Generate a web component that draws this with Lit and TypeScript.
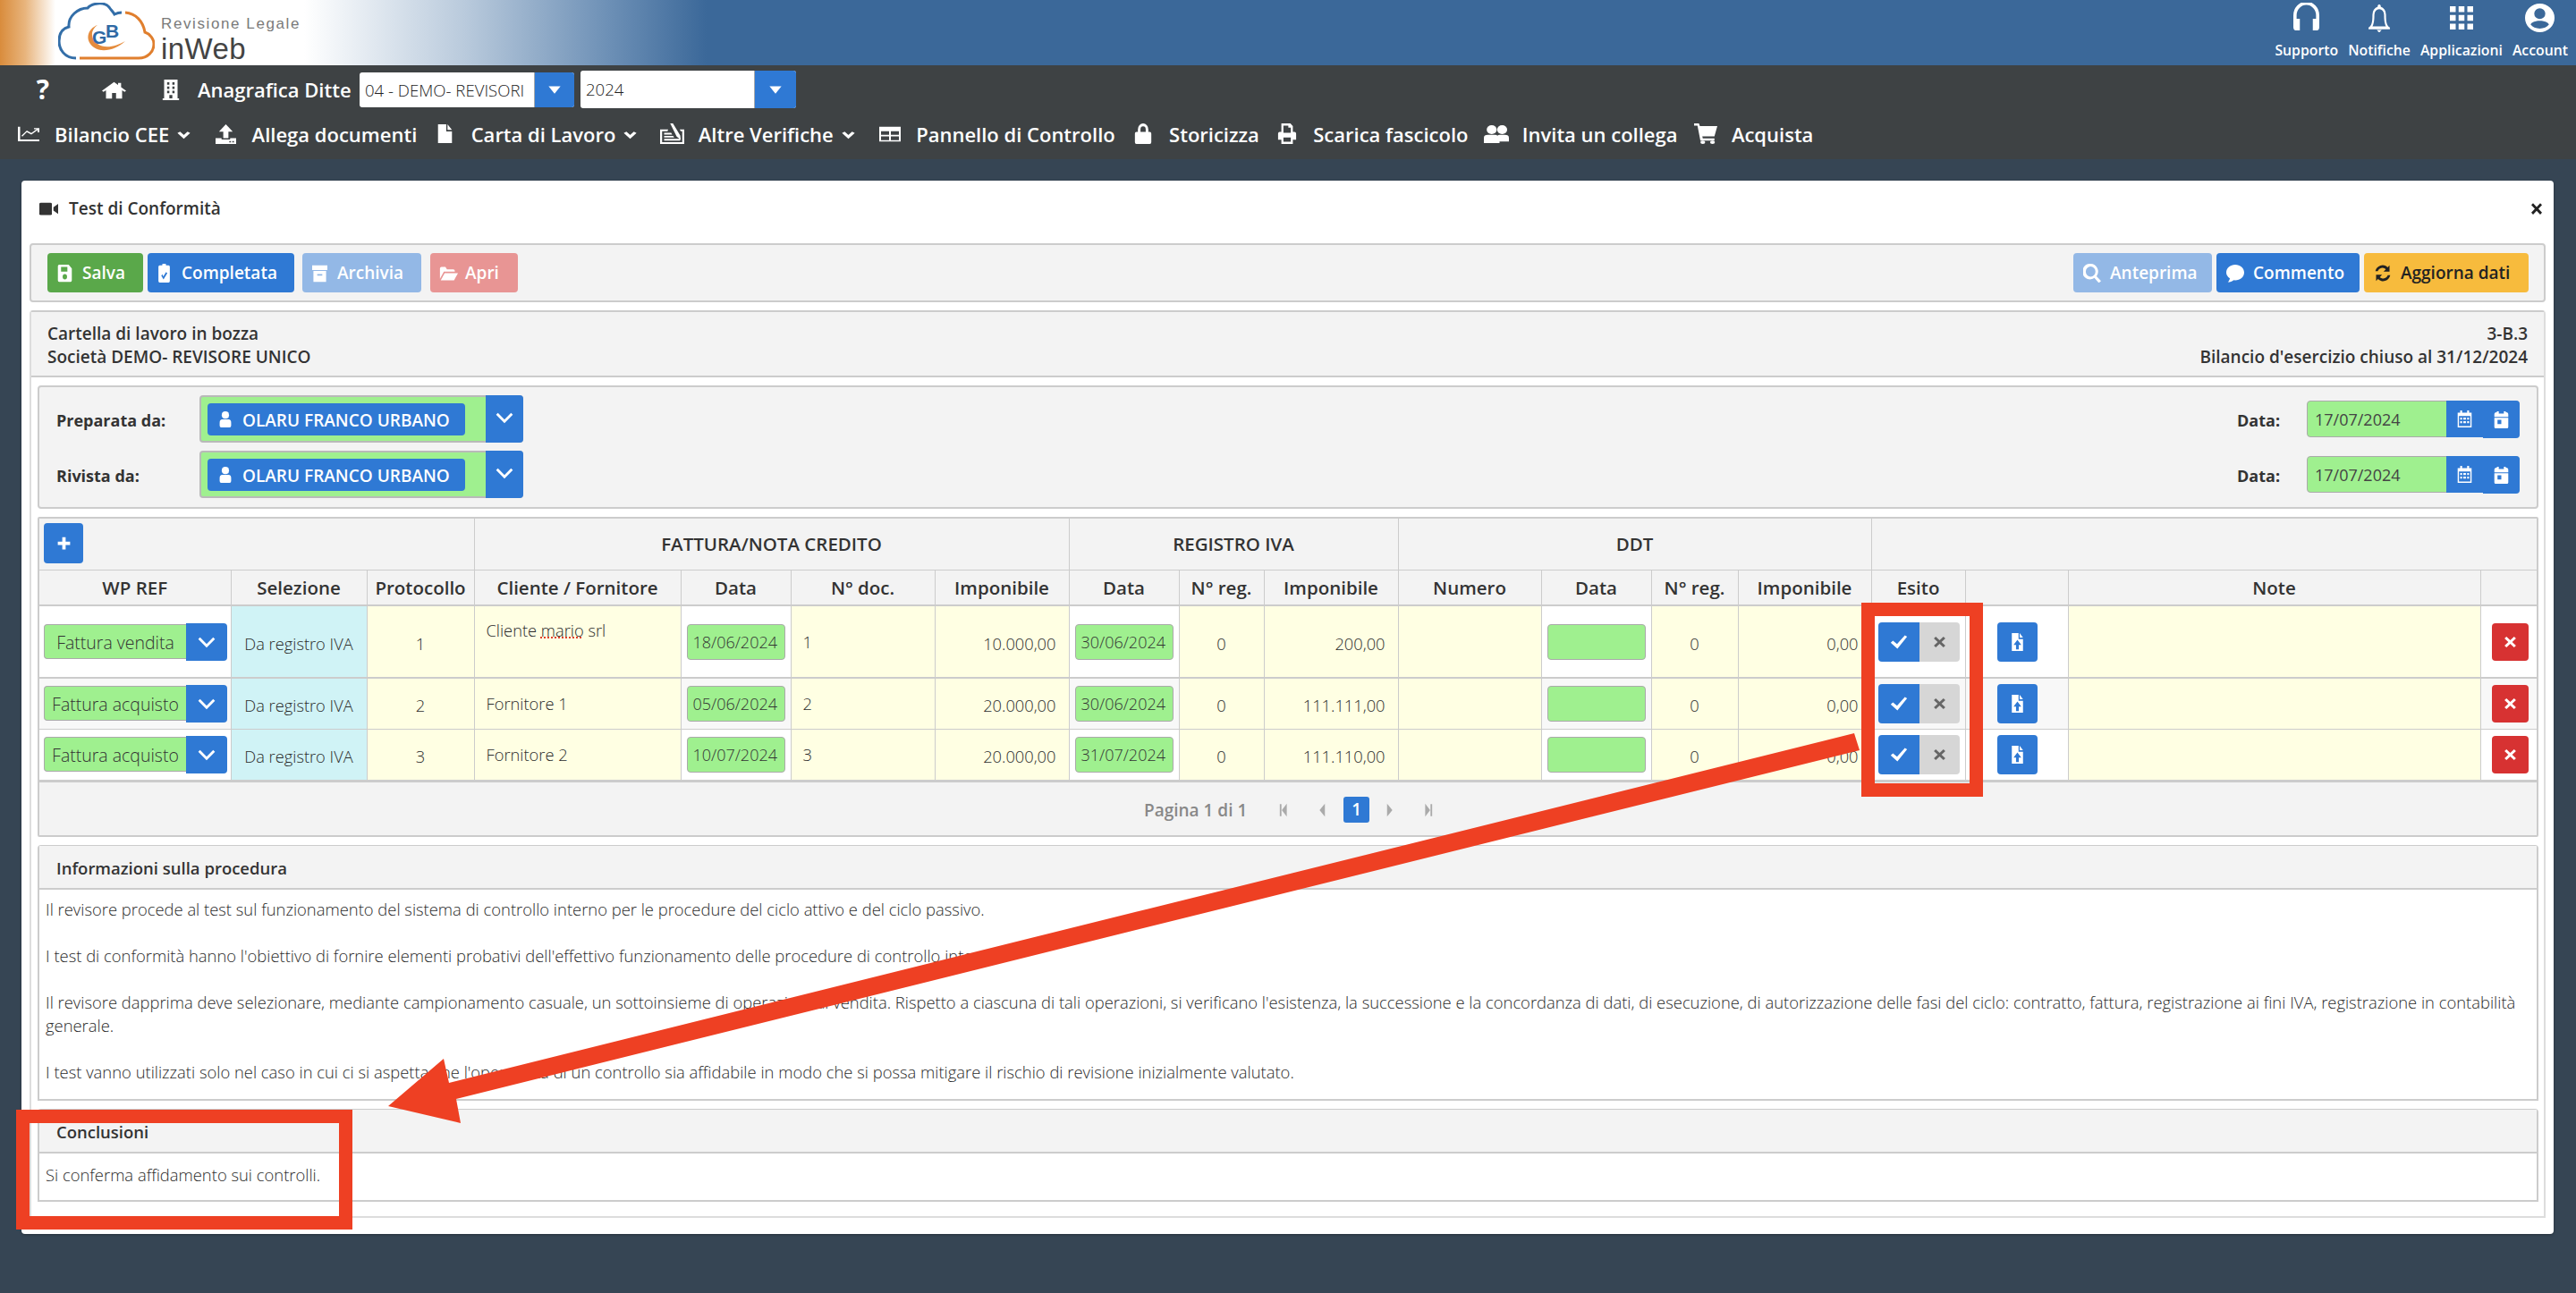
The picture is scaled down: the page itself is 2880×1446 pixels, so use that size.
import { LitElement, html, css, svg } from "lit";
import { customElement } from "lit/decorators.js";

const P: Record<string, any> = {
  home: svg`<path d="M12 2 0 13l1.500 1.700L4 12.500V23h6v-7h4v7h6V12.500l2.500 2.200L24 13l-5-4.500V3h-3v2.800z"/>`,
  building: svg`<path fill-rule="evenodd" d="M3 0h18v22h2v2H1v-2h2zM7 3v3h3V3zm7 0v3h3V3zM7 8v3h3V8zm7 0v3h3V8zM7 13v3h3v-3zm7 0v3h3v-3zm-4 5v4h4v-4z"/>`,
  chart: svg`<path d="M0 1h2.500v20H24v3H0z"/><path d="m4 15 6-8 5 4 6-6h-3V3h6v7h-2V6.500l-7 7-5-4-5 7z"/>`,
  upload: svg`<path d="M12 0 4 9h5v8h6V9h5z"/><path fill-rule="evenodd" d="M0 17h7v1.500h10V17h7v7H0zm16 3.500v1.500h2v-1.500zm3.500 0v1.500h2v-1.500z"/>`,
  file: svg`<path d="M1 0h13v9h9v15H1zM16 0l7 7h-7z"/>`,
  edit: svg`<path fill-rule="evenodd" d="M0 7h8l-.6 2H2v13h20V9h-1.500l-1-2H24v17H0z"/><path d="M10 0l2.500-.5L20 14l.5 5-4-3.500zM4 11h7l1 2H4zm0 3.500h9l1 2H4zM4 18h16v2H4z"/>`,
  table: svg`<path fill-rule="evenodd" d="M0 2h24v20H0zm2 6v5h9V8zm11 0v5h9V8zM2 15v5h9v-5zm11 0v5h9v-5z"/>`,
  lock: svg`<path fill-rule="evenodd" d="M5 10V7a7 7 0 0 1 14 0v3h2a2 2 0 0 1 2 2v10a2 2 0 0 1-2 2H3a2 2 0 0 1-2-2V12a2 2 0 0 1 2-2zm3.500 0h7V7a3.500 3.500 0 0 0-7 0z"/>`,
  print: svg`<path fill-rule="evenodd" d="M5 0h11l3 3v7h2a2 2 0 0 1 2 2v7h-4v5H5v-5H1v-7a2 2 0 0 1 2-2h2zm2.500 2.500V11h9V5h-3V2.500zm0 14V21.500h9v-5z"/>`,
  users: svg`<ellipse cx="7.500" cy="6" rx="4.800" ry="6"/><ellipse cx="17.500" cy="6" rx="4.800" ry="6"/><path d="M0 24v-7a4 4 0 0 1 4-4h7a3 3 0 0 1 2 1 3 3 0 0 1 2-1h5a4 4 0 0 1 4 4v5h-9v2z"/>`,
  cart: svg`<path d="M0 0h5l1 3h18l-3 12H8.500l.5 2.500h12V20H6.500L3.500 2.500H0z"/><ellipse cx="9" cy="22" rx="2.500" ry="2"/><ellipse cx="19" cy="22" rx="2.500" ry="2"/>`,
  headphones: svg`<path d="M3 14v-3a9 9 0 0 1 18 0v3h3v-3a12 12 0 0 0-24 0v10a3 3 0 0 0 3 3h3V14zM21 14h-3v10h3a3 3 0 0 0 3-3v-7z"/>`,
  bell: svg`<path fill-rule="evenodd" d="M12 0a1.500 1.500 0 0 1 1.500 2A7 7 0 0 1 19 9c0 7 1 9 4 11v1.500H1V20c3-2 4-4 4-11a7 7 0 0 1 5.500-7A1.500 1.500 0 0 1 12 0zM12 4a5 5 0 0 0-5 5c0 5-.6 7.500-2 10h14c-1.400-2.500-2-5-2-10a5 5 0 0 0-5-5z"/><path d="M9.500 22h5L12 24.500z"/>`,
  grid: svg`<path d="M0 0h6v6H0zm9 0h6v6H9zm9 0h6v6h-6zM0 9h6v6H0zm9 0h6v6H9zm9 0h6v6h-6zM0 18h6v6H0zm9 0h6v6H9zm9 0h6v6h-6z"/>`,
  account: svg`<path fill-rule="evenodd" d="M12 0a12 12 0 1 1 0 24 12 12 0 0 1 0-24zm0 4a4.500 4.500 0 1 0 0 9 4.500 4.500 0 0 0 0-9zm0 10.500c-3.500 0-6.500 1.200-7.500 3 1.500 2.200 4.300 3.500 7.500 3.500s6-1.300 7.500-3.500c-1-1.800-4-3-7.500-3z"/>`,
  video: svg`<rect x="0" y="1" width="16" height="22" rx="2"/><path d="M18 9 24 3v18l-6-6z"/>`,
  times: svg`<path d="m3 6 3-3 6 6 6-6 3 3-6 6 6 6-3 3-6-6-6 6-3-3 6-6z"/>`,
  check: svg`<path d="m1 13 3-3 5.500 5L20 2l3 2L10 22z"/>`,
  save: svg`<path fill-rule="evenodd" d="M3 1h15l5 5v15a2 2 0 0 1-2 2H3a2 2 0 0 1-2-2V3a2 2 0 0 1 2-2zm3 3v6h10V4zm6 9a3.500 3.500 0 1 0 0 7 3.500 3.500 0 0 0 0-7z"/>`,
  clip: svg`<path fill-rule="evenodd" d="M9 2a3 3 0 0 1 6 0h4a2 2 0 0 1 2 2v18a2 2 0 0 1-2 2H5a2 2 0 0 1-2-2V4a2 2 0 0 1 2-2zm-1.500 13L11 20l6-8-2-1.500-4.300 5.800L9.300 13.500z"/>`,
  archive: svg`<path fill-rule="evenodd" d="M0 2h24v6H0zM2 9h20v14H2zm6 4v2h8v-2z"/>`,
  folder: svg`<path d="M1 6a2 2 0 0 1 2-2h5l2 3h8a2 2 0 0 1 2 2v1H6L1 19z"/><path d="M7 12h17l-5 9H2z"/>`,
  search: svg`<path fill-rule="evenodd" d="M10 0a10 10 0 0 1 8 16l6 6-3 2.500-6-6.500A10 10 0 1 1 10 0zm0 3.500a6.500 6.500 0 1 0 0 13 6.500 6.500 0 0 0 0-13z"/>`,
  comment: svg`<path d="M12 1c6.600 0 12 4.400 12 10s-5.400 10-12 10l-2-.1C8 22.700 5 23.500 2 23.500c1.500-1.500 2.500-3 2.800-5C1.800 16.500 0 14 0 11 0 5.400 5.400 1 12 1z"/>`,
  refresh: svg`<path d="M21 2v8h-8l3-3a6.500 6.500 0 0 0-10.700 2.500H2A10 10 0 0 1 18.500 4.500zM3 22v-8h8l-3 3a6.500 6.500 0 0 0 10.700-2.500H22A10 10 0 0 1 5.500 19.500z"/>`,
  cal: svg`<path fill-rule="evenodd" d="M5 0h3v3h8V0h3v3h4v21H1V3h4zM3 8v14h18V8zm2 2h3v3H5zm5 0h4v3h-4zm6 0h3v3h-3zM5 15h3v3H5zm5 0h4v3h-4zm6 0h3v3h-3z"/>`,
  calCheck: svg`<path fill-rule="evenodd" d="M5 0h3v3h8V0h3v1.500a3 3 0 0 1 4 3V22a2 2 0 0 1-2 2H3a2 2 0 0 1-2-2V4.500a3 3 0 0 1 4-3zM1 8v1h22V8zm5 4v6h6v-6z"/>`,
  user: svg`<ellipse cx="12" cy="5.500" rx="7" ry="5.500"/><path d="M1 17a5 5 0 0 1 5-5h12a5 5 0 0 1 5 5v4a3 3 0 0 1-3 3H4a3 3 0 0 1-3-3z"/>`,
  plus: svg`<path d="M9 1h6v8h8v6h-8v8H9v-8H1V9h8z"/>`,
  fileup: svg`<path fill-rule="evenodd" d="M2 0h12v8h8v16H2zm10 9-7 7h4.500v6h5v-6H19zM16 0l6 6h-6z"/>`,
  chev: svg`<path d="M2 7 12 17 22 7" fill="none" stroke="currentColor" stroke-width="3.500"/>`,
  chevBold: svg`<path d="M3 5 12 17 21 5" fill="none" stroke="currentColor" stroke-width="6"/>`,
  caret: svg`<path d="M2 6h20L12 20z"/>`,
  first: svg`<path d="M4 2h4v20H4zM21 1v22L9 12z"/>`,
  prev: svg`<path d="M18 1v22L5 12z"/>`,
  next: svg`<path d="M6 1v22l13-11z"/>`,
  last: svg`<path d="M3 1v22l12-11zM16 2h4v20h-4z"/>`,
};

const ic = (n: string, cls = "") => html`<svg class="ic ${cls}" viewBox="0 0 24 24" preserveAspectRatio="none">${P[n]}</svg>`;

const ROWS = [
  { wp: "Fattura vendita", prot: "1", cli: "Cliente", cli2: "mario", cli3: "srl", d: "18/06/2024", doc: "1", imp: "10.000,00", rd: "30/06/2024", ri: "200,00", cls: "r1" },
  { wp: "Fattura acquisto", prot: "2", cli: "Fornitore 1", d: "05/06/2024", doc: "2", imp: "20.000,00", rd: "30/06/2024", ri: "111.111,00", cls: "r2" },
  { wp: "Fattura acquisto", prot: "3", cli: "Fornitore 2", d: "10/07/2024", doc: "3", imp: "20.000,00", rd: "31/07/2024", ri: "111.110,00", cls: "r3" },
];
const COLS = [214, 152, 120, 231, 123, 161, 150, 123, 95, 150, 160, 123, 97, 149, 105, 115, 461, 63];

@customElement("app-root")
export class AppRoot extends LitElement {
  static styles = css`
    :host { display: block; position: relative; width: 2880px; height: 1446px; overflow: hidden; background: #364554; font-family: "Open Sans", sans-serif; color: #333; }
    * { box-sizing: border-box; }
    .ic { display: block; fill: currentColor; flex: none; width: 20px; height: 20px; }
    .top { height: 73px; display: flex; justify-content: flex-end; padding-right: 9px; background: linear-gradient(90deg, #d98c3c 0, #e8b47c 28px, #fff 62px, #fff 340px, #b9cadc 520px, #6d90b6 680px, #3b6899 790px); position: relative; }
    .logo { position: absolute; left: 65px; top: 3px; width: 108px; height: 65px; }
    .brand { position: absolute; left: 180px; top: 0; }
    .brand .a { font: 400 17px/20px "Liberation Sans", sans-serif; letter-spacing: 1.600px; margin-top: 17px; color: #7a7a7a; white-space: nowrap; }
    .brand .b { font: 400 33px/36px "Liberation Sans", sans-serif; color: #444; letter-spacing: .4px; }
    .tools { display: flex; gap: 11px; color: #fff; font-size: 15.800px; font-weight: 600; }
    .tool { display: flex; flex-direction: column; align-items: center; }
    .tool .box { height: 46px; display: flex; align-items: center; justify-content: center; padding-bottom: 6px; }
    .tool span { line-height: 20px; }
    .i-h { width: 29px; height: 31px; margin-top: -4px; }
    .i-b { width: 26px; height: 31px; }
    .i-g { width: 26px; height: 26px; }
    .i-a { width: 33px; height: 32px; }

    .nav { height: 105px; background: #3e4244; color: #fff; font-size: 22px; font-weight: 600; }
    .row1 { height: 50px; display: flex; align-items: center; padding-top: 4px; }
    .row2 { height: 55px; display: flex; align-items: center; padding: 0 0 2px 18px; gap: 17.400px; }
    .q { width: 16px; margin-left: 40px; font-size: 30px; font-weight: 700; text-align: center; line-height: 34px; }
    .i-home { width: 27px; height: 21px; margin-left: 58px; }
    .i-bld { width: 20px; height: 23px; margin-left: 40px; }
    .anag { margin-left: 20px; width: 181px; white-space: nowrap; }
    .sel { display: flex; height: 39px; background: #fff; color: #222; font-size: 18.600px; font-weight: 300; border-radius: 3px; }
    .sel .v { padding-left: 6px; line-height: 39px; white-space: nowrap; overflow: hidden; width: 196px; border-right: 1px solid #aaa; }
    .sel .b { width: 44px; background: #2f79d4; border-radius: 0 3px 3px 0; display: flex; align-items: center; justify-content: center; color: #fff; }
    .sel.two { height: 42px; margin-left: 7px; }
    .sel.two .v { width: 195px; line-height: 42px; }
    .sel.two .b { width: 46px; }
    .i-caret { width: 16px; height: 14px; }
    .item { display: flex; align-items: center; white-space: nowrap; }
    .item .box { width: 28px; margin-right: 15px; display: flex; justify-content: center; }
    .n-chart { width: 24px; height: 17px; }
    .n-upload { width: 23px; height: 22px; }
    .n-file { width: 17px; height: 21px; }
    .n-edit { width: 27px; height: 23px; }
    .n-table { width: 24px; height: 20px; }
    .n-lock { width: 20px; height: 23px; }
    .n-print { width: 22px; height: 23px; }
    .n-users { width: 28px; height: 20px; }
    .n-cart { width: 26px; height: 23px; }
    .item .ch { width: 15px; height: 10px; margin: 3px 8px 0 9px; }

    .card { position: relative; margin: 24px 0 0 24px; width: 2831px; height: 1178px; background: #fff; border-radius: 4px; padding: 0 9px; box-shadow: 0 1px 3px rgba(0,0,0,.3); }
    .ctitle { height: 70px; display: flex; align-items: center; font-size: 19px; font-weight: 600; padding: 0 2px 8px 11px; color: #333; }
    .ctitle .i-v { width: 21px; height: 15px; margin-right: 12px; color: #333; }
    .ctitle .x { width: 16px; height: 17px; margin-right: 0; color: #222; }
    .bar { height: 66px; border: 2px solid #ccc; border-radius: 4px; background: #f3f3f3; display: flex; align-items: center; padding: 0 17px 0 18px; }
    .btn { height: 44px; border-radius: 4px; display: flex; align-items: center; color: #fff; font-size: 19px; font-weight: 600; white-space: nowrap; padding-left: 11px; }
    .btn .ic { width: 17px; height: 21px; margin-right: 11px; }
    .green { background: #5aa84a; } .blue { background: #2f79d4; } .lblue { background: #93b8e6; } .pink { background: #e89594; } .yellow { background: #f7bb3d; color: #222; }
    .w1 { width: 107px; margin-right: 5px; } .w2 { width: 164px; margin-right: 9px; padding-left: 10px; } .w3 { width: 133px; margin-right: 10px; } .w4 { width: 98px; padding-left: 10px; }
    .w4 .ic { width: 21px; margin-right: 8px; }
    .w5 { width: 155px; margin-right: 5px; } .w6 { width: 160px; margin-right: 5px; } .w7 { width: 184px; }
    .w5 .ic, .w6 .ic, .w7 .ic { width: 20px; margin-right: 10px; }
    .grow { flex: 1; }
    .outer { margin-top: 9px; height: 1015px; border: 2px solid #ddd; border-top: 2px solid #ccc; border-radius: 4px 4px 0 0; }
    .ohead { height: 73px; background: #f3f3f3; border-bottom: 2px solid #ccc; padding: 2px 18px 0; display: flex; justify-content: space-between; font-size: 19px; font-weight: 600; line-height: 26px; align-items: center; }
    .ohead .r { text-align: right; }
    .obody { padding: 9px 6px 0 7px; }
    .people { height: 138px; border: 2px solid #ccc; border-radius: 4px; background: #f3f3f3; display: grid; grid-template-rows: 53px 53px; row-gap: 9px; padding: 9px 0 0 19px; }
    .prow { display: flex; align-items: center; font-size: 18px; font-weight: 700; }
    .prow .lbl { width: 160px; padding-top: 2px; }
    .pick { width: 362px; height: 53px; display: flex; background: #9ff08f; border: 2px solid #b9b9b9; border-radius: 4px; align-items: center; padding-left: 7px; }
    .chip { width: 288px; height: 36px; background: #2f79d4; border-radius: 4px; color: #fff; display: flex; align-items: center; padding: 2px 0 0 13px; white-space: nowrap; font-size: 19px; font-weight: 600; }
    .chip .ic { width: 14px; height: 18px; margin: -2px 12px 0 0; }
    .pick .arr { margin-left: auto; width: 42px; align-self: stretch; margin-top: -2px; margin-bottom: -2px; margin-right: -2px; background: #2f79d4; border-radius: 0 4px 4px 0; color: #fff; display: flex; justify-content: center; padding-top: 15px; }
    .i-chev { width: 20px; height: 20px; }
    .prow .data { margin-left: auto; width: 78px; padding-top: 2px; }
    .dinp { width: 238px; height: 41px; display: flex; margin-right: 19px; border: 1px solid #aaa; border-radius: 4px; background: #9ff08f; font-size: 18px; font-weight: 400; color: #444; line-height: 41px; padding-left: 8px; }
    .dinp .t { width: 148px; }
    .dinp .db { width: 41px; margin: -1px 0; background: #2f79d4; color: #fff; display: flex; align-items: center; justify-content: center; }
    .dinp .db:last-child { margin: -1px -1px -2px 0; border-radius: 0 4px 4px 0; }
    .dinp .ic { width: 17px; height: 19px; }

    .tw { margin-top: 9px; height: 358px; border: 2px solid #ccc; background: #f3f3f3; border-radius: 2px; }
    table { border-collapse: collapse; table-layout: fixed; width: 2792px; font-size: 18.300px; font-weight: 300; color: #2c2c2c; }
    th { background: #f3f3f3; font-size: 20.500px; font-weight: 600; border: 1px solid #ccc; padding: 0; white-space: nowrap; color: #333; }
    .h1 { height: 57px; border-top: 0; }
    .h2 { height: 40px; border-bottom-width: 2px; }
    th:first-child, td:first-child { border-left: 0; }
    th:last-child, td:last-child { border-right: 0; }
    td { border: 1px solid #ccc; padding: 0; white-space: nowrap; vertical-align: middle; }
    tr.r1 td { height: 81px; background: #fff; }
    tr.r2 td { height: 57px; border-top: 2px solid #ccc; background: #f8f8f8; }
    tr.r3 td { height: 58px; border-bottom: 3px solid #ccc; background: #fff; }
    tr td.y { background: #ffffe3; }
    tr td.c { background: #d0f3f6; text-align: center; padding-top: 4px; }
    .ct { text-align: center; padding-top: 4px; }
    .rt { text-align: right; padding: 4px 14px 0 0; }
    .lt { padding: 0 0 0 13px; }
    .lt.atop { vertical-align: top; padding-top: 14px; }
    .sp { text-decoration: underline dotted #e0402a; }
    .wp { display: flex; align-items: center; margin-left: 5px; font-size: 19.500px; }
    .wp .v { width: 159px; height: 39px; background: #9ff08f; border: 1px solid #aaa; border-right: 0; border-radius: 4px 0 0 4px; line-height: 40px; text-align: center; overflow: hidden; color: #333; }
    .wp .a2 { width: 46px; height: 42px; background: #2f79d4; border-radius: 0 4px 4px 0; color: #fff; display: flex; align-items: center; justify-content: center; }
    .date { display: block; width: 110px; height: 40px; margin: 0 auto; background: #9ff08f; border: 1px solid #aaa; border-radius: 4px; line-height: 39px; font-size: 18px; padding-left: 6px; color: #333; }
    .esito { display: flex; width: 91px; height: 44px; margin-left: 7px; border-radius: 4px; overflow: hidden; }
    .esito div { flex: 1; display: flex; align-items: center; justify-content: center; }
    .esito .ok { background: #2f79d4; color: #fff; flex: none; width: 46px; }
    .esito .no { background: #d6d6d6; color: #666; }
    .esito .ok .ic { width: 20px; height: 18px; }
    .esito .no .ic { width: 17px; height: 16px; }
    .fu { width: 45px; height: 44px; background: #2f79d4; border-radius: 4px; color: #fff; margin-left: 35px; display: flex; align-items: center; justify-content: center; }
    .fu .ic { width: 15px; height: 20px; }
    .del { width: 41px; height: 42px; background: #d73232; border-radius: 4px; color: #fff; margin-left: 12px; display: flex; align-items: center; justify-content: center; }
    .del .ic { width: 17px; height: 16px; }
    .plus { width: 44px; height: 45px; margin-left: 5px; background: #2f79d4; border-radius: 4px; color: #fff; display: flex; align-items: center; justify-content: center; margin-top: -2px; }
    .plus .ic { width: 15px; height: 15px; }
    .pg { height: 62px; display: flex; align-items: center; font-size: 19px; font-weight: 600; color: #888; padding-left: 1235px; }
    .pg .ic { width: 11px; height: 16px; color: #aaa; }
    .pg .t { margin-right: 35px; }
    .pg .m { margin-right: 33px; }
    .pg .m2 { margin-right: 18px; }
    .pg .cur { width: 29px; height: 29px; background: #2f79d4; color: #fff; border-radius: 3px; text-align: center; line-height: 29px; margin-right: 17px; }

    .sec { margin-top: 9px; border: 2px solid #ccc; border-radius: 4px 4px 0 0; border-width: 1px 2px 2px 2px; }
    .sec h3 { margin: 0; height: 49px; background: #f3f3f3; border-bottom: 2px solid #ccc; font-size: 18.500px; font-weight: 600; line-height: 50px; padding-left: 19px; }
    .info { height: 286px; }
    .concl { height: 104px; }
    .sec .t { padding: 9px 7px 0; font-size: 18.400px; font-weight: 300; line-height: 26px; color: #2c2c2c; }
    .sec p { margin: 0 0 26px; }
    .concl .t { padding-top: 11px; }

    .ann { position: absolute; border: 15px solid #ee4023; pointer-events: none; }
    .a1 { left: 2081px; top: 674px; width: 136px; height: 217px; }
    .a2b { left: 18px; top: 1241px; width: 376px; height: 134px; }
    .arrow { position: absolute; left: 0; top: 0; width: 2880px; height: 1446px; pointer-events: none; }
  `;

  renderLogo() {
    return html`<svg class="logo" viewBox="65 3 108 65">
      <path d="M85 65C72 65 66 55 66 46 66 35 72 31 77 30 76 18 87 9 98 9 102 4 116 1 122 8 124 11 127 14 128 16 130 15 133 14 136 14" fill="none" stroke="#336ea8" stroke-width="3"/>
      <path d="M140 14C152 15 160 24 162 36 168 38 172 44 172 49 172 58 165 65 155 65H89" fill="none" stroke="#e07f2e" stroke-width="3"/>
      <path d="M109 28C98 32 94 45 105 53 115 60 130 55 140 46 130 52 117 55 109 49 100 42 102 33 109 28z" fill="#e58c3d"/>
      <text x="103" y="49" font-family="Liberation Sans" font-size="21" font-weight="700" fill="#2f6aa5">G</text>
      <text x="118" y="42" font-family="Liberation Sans" font-size="21" font-weight="700" fill="#2f6aa5">B</text>
    </svg>
    <div class="brand"><div class="a">Revisione Legale</div><div class="b">inWeb</div></div>`;
  }

  render() {
    const nav: [string, string, boolean][] = [
      ["chart", "Bilancio CEE", true],
      ["upload", "Allega documenti", false],
      ["file", "Carta di Lavoro", true],
      ["edit", "Altre Verifiche", true],
      ["table", "Pannello di Controllo", false],
      ["lock", "Storicizza", false],
      ["print", "Scarica fascicolo", false],
      ["users", "Invita un collega", false],
      ["cart", "Acquista", false],
    ];
    const person = (l: string) => html`<div class="prow">
      <div class="lbl">${l}</div>
      <div class="pick"><div class="chip">${ic("user")}OLARU FRANCO URBANO</div><div class="arr">${ic("chev", "i-chev")}</div></div>
      <div class="data">Data:</div>
      <div class="dinp"><div class="t">17/07/2024</div><div class="db">${ic("cal")}</div><div class="db">${ic("calCheck")}</div></div>
    </div>`;
    return html`
      <div class="top">
        ${this.renderLogo()}
        <div class="tools">
          <div class="tool"><div class="box">${ic("headphones", "i-h")}</div><span>Supporto</span></div>
          <div class="tool"><div class="box">${ic("bell", "i-b")}</div><span>Notifiche</span></div>
          <div class="tool"><div class="box">${ic("grid", "i-g")}</div><span>Applicazioni</span></div>
          <div class="tool"><div class="box">${ic("account", "i-a")}</div><span>Account</span></div>
        </div>
      </div>
      <div class="nav">
        <div class="row1">
          <div class="q">?</div>
          ${ic("home", "i-home")}
          ${ic("building", "i-bld")}
          <div class="anag">Anagrafica Ditte</div>
          <div class="sel"><div class="v">04 - DEMO- REVISORI</div><div class="b">${ic("caret", "i-caret")}</div></div>
          <div class="sel two"><div class="v">2024</div><div class="b">${ic("caret", "i-caret")}</div></div>
        </div>
        <div class="row2">
          ${nav.map(([i, t, c]) => html`<div class="item"><div class="box">${ic(i, "n-" + i)}</div>${t}${c ? ic("chevBold", "ch") : ""}</div>`)}
        </div>
      </div>
      <div class="card">
        <div class="ctitle">${ic("video", "i-v")}Test di Conformità<div class="grow"></div>${ic("times", "x")}</div>
        <div class="bar">
          <div class="btn green w1">${ic("save")}Salva</div>
          <div class="btn blue w2">${ic("clip")}Completata</div>
          <div class="btn lblue w3">${ic("archive")}Archivia</div>
          <div class="btn pink w4">${ic("folder")}Apri</div>
          <div class="grow"></div>
          <div class="btn lblue w5">${ic("search")}Anteprima</div>
          <div class="btn blue w6">${ic("comment")}Commento</div>
          <div class="btn yellow w7">${ic("refresh")}Aggiorna dati</div>
        </div>
        <div class="outer">
          <div class="ohead">
            <div>Cartella di lavoro in bozza<br />Società DEMO- REVISORE UNICO</div>
            <div class="r">3-B.3<br />Bilancio d'esercizio chiuso al 31/12/2024</div>
          </div>
          <div class="obody">
            <div class="people">${person("Preparata da:")}${person("Rivista da:")}</div>
            <div class="tw">
              <table>
                <colgroup>${COLS.map((w) => html`<col width=${w} />`)}</colgroup>
                <tr>
                  <th class="h1" colspan="3"><div class="plus">${ic("plus")}</div></th>
                  <th class="h1" colspan="4">FATTURA/NOTA CREDITO</th>
                  <th class="h1" colspan="3">REGISTRO IVA</th>
                  <th class="h1" colspan="4">DDT</th>
                  <th class="h1" colspan="4"></th>
                </tr>
                <tr>
                  ${["WP REF", "Selezione", "Protocollo", "Cliente / Fornitore", "Data", "N° doc.", "Imponibile", "Data", "N° reg.", "Imponibile", "Numero", "Data", "N° reg.", "Imponibile", "Esito", "", "Note", ""].map((h) => html`<th class="h2">${h}</th>`)}
                </tr>
                ${ROWS.map((r) => html`<tr class=${r.cls}>
                  <td><div class="wp"><div class="v">${r.wp}</div><div class="a2">${ic("chev", "i-chev")}</div></div></td>
                  <td class="c">Da registro IVA</td>
                  <td class="y ct">${r.prot}</td>
                  <td class="y lt ${r.cli2 ? "atop" : ""}">${r.cli}${r.cli2 ? html` <span class="sp">${r.cli2}</span> ${r.cli3}` : ""}</td>
                  <td><span class="date">${r.d}</span></td>
                  <td class="y lt">${r.doc}</td>
                  <td class="y rt">${r.imp}</td>
                  <td><span class="date">${r.rd}</span></td>
                  <td class="y ct">0</td>
                  <td class="y rt">${r.ri}</td>
                  <td class="y"></td>
                  <td><span class="date"></span></td>
                  <td class="y ct">0</td>
                  <td class="y rt">0,00</td>
                  <td><div class="esito"><div class="ok">${ic("check")}</div><div class="no">${ic("times")}</div></div></td>
                  <td><div class="fu">${ic("fileup")}</div></td>
                  <td class="y"></td>
                  <td><div class="del">${ic("times")}</div></td>
                </tr>`)}
              </table>
              <div class="pg">
                <span class="t">Pagina 1 di 1</span>
                <span class="m">${ic("first")}</span><span class="m2">${ic("prev")}</span>
                <span class="cur">1</span>
                <span class="m">${ic("next")}</span><span>${ic("last")}</span>
              </div>
            </div>
            <div class="sec info">
              <h3>Informazioni sulla procedura</h3>
              <div class="t">
                <p>Il revisore procede al test sul funzionamento del sistema di controllo interno per le procedure del ciclo attivo e del ciclo passivo.</p>
                <p>I test di conformità hanno l'obiettivo di fornire elementi probativi dell'effettivo funzionamento delle procedure di controllo interno.</p>
                <p>Il revisore dapprima deve selezionare, mediante campionamento casuale, un sottoinsieme di operazioni di vendita. Rispetto a ciascuna di tali operazioni, si verificano l'esistenza, la successione e la concordanza di dati, di esecuzione, di autorizzazione delle fasi del ciclo: contratto, fattura, registrazione ai fini IVA, registrazione in contabilità generale.</p>
                <p>I test vanno utilizzati solo nel caso in cui ci si aspetta che l'operatività di un controllo sia affidabile in modo che si possa mitigare il rischio di revisione inizialmente valutato.</p>
              </div>
            </div>
            <div class="sec concl">
              <h3>Conclusioni</h3>
              <div class="t">Si conferma affidamento sui controlli.</div>
            </div>
          </div>
        </div>
      </div>
      <div class="ann a1"></div>
      <div class="ann a2b"></div>
      <svg class="arrow" viewBox="0 0 2880 1446"><path fill="#ee4023" d="M2073 820 2079 839 510 1229 515 1256 434 1237 496 1184 502 1211z"/></svg>
    `;
  }
}
